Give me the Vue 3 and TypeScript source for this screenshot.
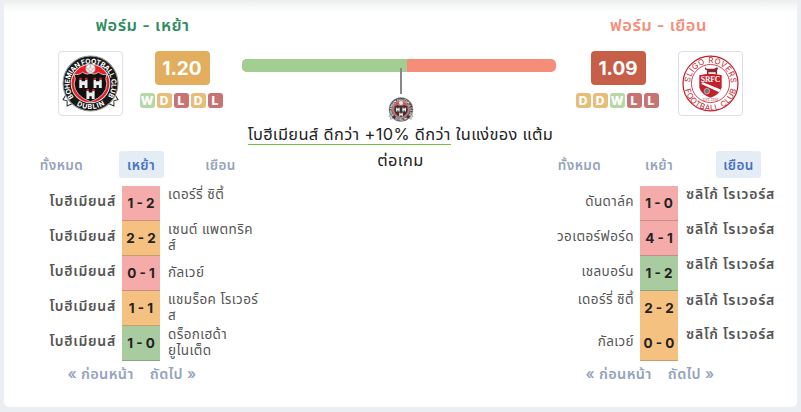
<script setup lang="ts">
	type Result = "W" | "D" | "L";

	interface Match {
		home: string[];
		away: string[];
		score: string;
		result: Result;
	}

	interface Team {
		side: "home" | "away";
		title: string;
		crest: string;
		ppg: string;
		form: Result[];
		activeTab: number;
		matches: Match[];
	}

	const tabs = ["ทั้งหมด", "เหย้า", "เยือน"];

	// An empty second entry keeps the two-line height of a name
	const teams: Team[] = [
		{
			side: "home",
			title: "ฟอร์ม - เหย้า",
			crest: "#bohemian",
			ppg: "1.20",
			form: ["W", "D", "L", "D", "L"],
			activeTab: 1,
			matches: [
				{ home: ["โบฮีเมียนส์"], away: ["เดอร์รี่ ซิตี้", ""], score: "1 - 2", result: "L" },
				{ home: ["โบฮีเมียนส์"], away: ["เซนต์ แพตทริค", "ส์"], score: "2 - 2", result: "D" },
				{ home: ["โบฮีเมียนส์"], away: ["กัลเวย์"], score: "0 - 1", result: "L" },
				{ home: ["โบฮีเมียนส์"], away: ["แชมร็อค โรเวอร์", "ส"], score: "1 - 1", result: "D" },
				{ home: ["โบฮีเมียนส์"], away: ["ดร็อกเฮด้า", "ยูไนเต็ด"], score: "1 - 0", result: "W" },
			],
		},
		{
			side: "away",
			title: "ฟอร์ม - เยือน",
			crest: "#sligo",
			ppg: "1.09",
			form: ["D", "D", "W", "L", "L"],
			activeTab: 2,
			matches: [
				{ home: ["ดันดาล์ค"], away: ["ซลิโก้ โรเวอร์ส", ""], score: "1 - 0", result: "L" },
				{ home: ["วอเตอร์ฟอร์ด"], away: ["ซลิโก้ โรเวอร์ส", ""], score: "4 - 1", result: "L" },
				{ home: ["เชลบอร์น"], away: ["ซลิโก้ โรเวอร์ส", ""], score: "1 - 2", result: "W" },
				{ home: ["เดอร์รี่ ซิตี้", ""], away: ["ซลิโก้ โรเวอร์ส", ""], score: "2 - 2", result: "D" },
				{ home: ["กัลเวย์"], away: ["ซลิโก้ โรเวอร์ส", ""], score: "0 - 0", result: "D" },
			],
		},
	];

	const homeShare = 52.6;
</script>

<template>
	<div class="page">
		<svg class="defs" width="0" height="0">
			<symbol id="bohemian" viewBox="0 0 56 56">
				<path d="M5 37l-4 7 4 1 0 5 7-3M51 37l4 7-4 1 0 5-7-3" fill="#fff" stroke="#333" stroke-width="1" />
				<circle cx="28" cy="28" r="27" fill="#181818" stroke="#999" stroke-width="1" />
				<circle cx="28" cy="28" r="19" fill="#ed1c24" stroke="#ddd" stroke-width="1" />
				<path id="bohTop" d="M11.6 41.5A20.6 20.6 0 1 1 44.4 41.5" fill="none" />
				<path id="bohBottom" d="M12 47.5A25.6 25.6 0 0 0 44 47.5" fill="none" />
				<text class="ring boh"><textPath href="#bohTop" textLength="90">BOHEMIAN FOOTBALL CLUB</textPath></text>
				<text class="ring boh"><textPath href="#bohBottom" startOffset="3" textLength="29">DUBLIN</textPath></text>
				<path d="M12 19q5 1 8-2 4 3 8 1 4 2 8-1 3 3 8 2-2 4 0 9 0 12-16 18Q12 40 12 28q2-5 0-9z" fill="#111" stroke="#ddd" stroke-width=".8" />
				<circle cx="28" cy="13.5" r="4.7" fill="#eee" stroke="#999" stroke-width=".5" />
				<path d="M28 9v3l-2 2 1 2h2l1-2-2-2M23.5 13l2.5 1M32.5 13l-2.5 1M27 16l-1 2M29 16l1 2" fill="none" stroke="#aaa" stroke-width=".7" />
				<g v-for="(pos, i) in ['17,22', '31,22', '24,33']" :key="i" :transform="`translate(${pos}) scale(1.15)`">
					<path d="M0 2h2v1.4h3V2h2v7H4.5V6.5h-2V9H0z" fill="#eee" />
					<path d="M0 2V.3h2V2M5 2V.3h2V2" fill="#ed1c24" />
				</g>
			</symbol>
			<symbol id="sligo" viewBox="0 0 56 56">
				<circle cx="28" cy="28" r="27" fill="#fff" stroke="#c4202b" stroke-width="1.2" />
				<circle cx="28" cy="28" r="18.7" fill="#fff" stroke="#c4202b" stroke-width=".8" />
				<path id="sligoTop" d="M8 28A20 20 0 0 1 48 28" fill="none" />
				<path id="sligoBottom" d="M2.3 31A25.8 25.8 0 0 0 53.7 31" fill="none" />
				<text class="ring sligo"><textPath href="#sligoTop" startOffset="1" textLength="61">SLIGO ROVERS</textPath></text>
				<text class="ring sligo"><textPath href="#sligoBottom" startOffset="3" textLength="70">FOOTBALL CLUB</textPath></text>
				<path d="M17 20q11-3 22 0v12q-2 7-11 10-9-3-11-10z" fill="#c4202b" />
				<path d="M22.5 12l2 1.5h7l3-1.5 1 1-1 2v4h-1.5v-2H26v2h-1.5v-4l-2-1z" fill="#8e2530" />
				<text class="srfc" x="28" y="26.2" text-anchor="middle" textLength="19">SRFC</text>
				<path d="M20 26.5l18 7.5-1.5 2.5L19 28.5z" fill="#fff" />
				<circle cx="24.5" cy="35.5" r="2.7" fill="#777" stroke="#eee" stroke-width=".5" />
				<text class="est" x="28" y="45.5" text-anchor="middle">EST. 1928</text>
			</symbol>
		</svg>

		<main class="card">
			<section v-for="team in teams" :key="team.side" class="panel" :class="team.side">
				<h2 class="title">{{ team.title }}</h2>
				<div class="summary">
					<div class="crest">
						<svg><use :href="team.crest" /></svg>
					</div>
					<div class="stats">
						<span class="ppg">{{ team.ppg }}</span>
						<div class="form">
							<span v-for="(r, i) in team.form" :key="i" class="badge" :class="`badge-${r}`">{{ r }}</span>
						</div>
					</div>
				</div>
				<nav class="tabs">
					<button v-for="(tab, i) in tabs" :key="tab" class="tab" :class="{ active: i === team.activeTab }"><span>{{ tab }}</span></button>
				</nav>
				<div v-for="(match, i) in team.matches" :key="i" class="match">
					<div class="name left" :class="{ own: team.side === 'home' }">
						<div v-for="(line, n) in match.home" :key="n" class="line">{{ line }}</div>
					</div>
					<div class="score" :class="`score-${match.result}`">{{ match.score }}</div>
					<div class="name right" :class="{ own: team.side === 'away' }">
						<div v-for="(line, n) in match.away" :key="n" class="line">{{ line }}</div>
					</div>
				</div>
				<div class="pager">
					<a>« <span>ก่อนหน้า</span></a>
					<a><span>ถัดไป</span> »</a>
				</div>
			</section>

			<section class="compare">
				<div class="bar">
					<div class="bar-home" :style="{ width: `${homeShare}%` }"></div>
				</div>
				<div class="pointer"></div>
				<svg class="mini-crest"><use href="#bohemian" /></svg>
				<p class="verdict">
					<span class="better">โบฮีเมียนส์ ดีกว่า +10% ดีกว่า</span> ในแง่ของ แต้ม<br />ต่อเกม
				</p>
			</section>
		</main>
	</div>
</template>

<style>
	body {
		margin: 0;
		overflow: hidden;
		background: #ebeef2;
	}
</style>

<style scoped>
	.page {
		width: 801px;
		height: 412px;
		box-sizing: border-box;
		padding: 0 4px 5px;
		font-family: Inter, "Noto Sans Thai", "Noto Sans", sans-serif;
		background: #ebeef2;
	}

	.defs {
		display: block;
	}

	.card {
		height: 407px;
		display: grid;
		grid-template-columns: 262px 1fr 262px;
		padding: 0 7px 0 6px;
		box-sizing: border-box;
		border-radius: 0 0 5px 5px;
		background: linear-gradient(#eceeee, #fff 12px);
	}

	.panel {
		grid-row: 1;
		grid-column: 1;
	}

	.panel.away {
		grid-column: 3;
	}

	.title {
		height: 51px;
		margin: 0;
		padding-left: 3px;
		text-align: center;
		font-size: 16.5px;
		line-height: 50px;
		font-weight: 600;
		letter-spacing: 0.5px;
		white-space: nowrap;
		color: #2e8b62;
	}

	.away .title {
		padding: 0 1px 0 0;
		color: #f78c78;
	}

	.summary {
		display: flex;
		gap: 17px;
		height: 100px;
		padding-left: 48px;
	}

	.away .summary {
		flex-direction: row-reverse;
		justify-content: flex-end;
		gap: 20px;
	}

	.crest {
		width: 65px;
		height: 65px;
		box-sizing: border-box;
		padding: 3px;
		border: 1px solid #dcdee8;
		border-radius: 4px;
	}

	.crest svg {
		display: block;
		width: 57px;
		height: 57px;
	}

	.stats {
		width: 82px;
		display: flex;
		flex-direction: column;
		align-items: center;
		gap: 8px;
	}

	.ppg {
		width: 55px;
		margin-left: 2px;
		border-radius: 4px;
		text-align: center;
		font-size: 19px;
		line-height: 36px;
		height: 34px;
		font-weight: 700;
		color: #fff;
		background: #e2ae5d;
	}

	.away .ppg {
		background: #c75e47;
	}

	.form {
		display: flex;
		gap: 2px;
	}

	.badge {
		width: 15px;
		height: 15px;
		border-radius: 3px;
		text-align: center;
		font: 800 12px/16px Inter, sans-serif;
		color: #fff;
	}

	.badge-W { background: #b5d8a6; }
	.badge-D { background: #e7bd79; }
	.badge-L { background: #c87373; }

	.tabs {
		display: grid;
		grid-template-columns: repeat(3, 79.5px);
		justify-content: center;
		justify-items: center;
		height: 35px;
	}

	.tab {
		width: 45px;
		height: 27px;
		padding: 0;
		border: 0;
		border-radius: 3px;
		font: 600 13.5px/26px Inter, "Noto Sans Thai", sans-serif;
		letter-spacing: 0.4px;
		white-space: nowrap;
		color: #95a3bd;
		background: none;
	}

	.tab.active {
		color: #4873bd;
		background: #e4ecf5;
	}

	.match {
		display: grid;
		grid-template-columns: 106px 38px 1fr;
		column-gap: 6px;
		height: 35px;
	}

	.name {
		display: flex;
		flex-direction: column;
		justify-content: center;
		padding-bottom: 3px;
		font-size: 13.5px;
		line-height: 16px;
		letter-spacing: 0.4px;
		white-space: nowrap;
		color: #555;
	}

	.name.own {
		font-size: 14px;
		font-weight: 600;
		letter-spacing: 0.75px;
	}

	.left {
		padding-bottom: 5px;
		align-items: flex-end;
	}

	.right {
		padding-left: 2px;
		align-items: flex-start;
	}

	.line {
		height: 16px;
	}

	.score {
		box-sizing: border-box;
		border-bottom: 1px solid rgba(0, 0, 0, 0.18);
		text-align: center;
		font-size: 13.5px;
		line-height: 34px;
		font-weight: 700;
		white-space: nowrap;
		color: #222;
	}

	.score-W { background: #a8cb9f; }
	.score-D { background: #f5c180; }
	.score-L { background: #f5aba9; }

	.pager {
		display: flex;
		justify-content: center;
		gap: 16px;
		padding-right: 18px;
		font-size: 14.5px;
		line-height: 25px;
		font-weight: 600;
		letter-spacing: 0.35px;
		white-space: nowrap;
		color: #95a3bd;
	}

	.compare {
		grid-row: 1;
		grid-column: 2;
		display: flex;
		flex-direction: column;
		align-items: center;
		margin: 0 -29px 0 -31px;
		padding-top: 59px;
	}

	.bar {
		width: 314px;
		height: 13px;
		border-radius: 5px;
		overflow: hidden;
		background: #f68d78;
	}

	.bar-home {
		height: 100%;
		background: #a2ce91;
	}

	.pointer {
		width: 2px;
		height: 26px;
		margin: -4px 0 3px 4px;
		background: #888;
	}

	.mini-crest {
		width: 26px;
		height: 25px;
		margin-left: 3px;
		opacity: 0.85;
	}

	.verdict {
		margin: 0 0 0 3px;
		text-align: center;
		font-size: 16.4px;
		line-height: 25.5px;
		letter-spacing: 0.35px;
		white-space: nowrap;
		color: #222;
	}

	.better {
		border-bottom: 1px solid #75bf43;
	}

	.ring {
		font-family: Inter, sans-serif;
		font-weight: 700;
	}

	.boh {
		font-size: 6.8px;
		fill: #fff;
	}

	.sligo {
		font-size: 7.8px;
		font-weight: 400;
		fill: #c4202b;
	}

	.srfc {
		font: 700 7.5px "Liberation Serif", serif;
		fill: #fff;
	}

	.est {
		font: 3.5px "Liberation Serif", serif;
		fill: #c4202b;
	}
</style>
